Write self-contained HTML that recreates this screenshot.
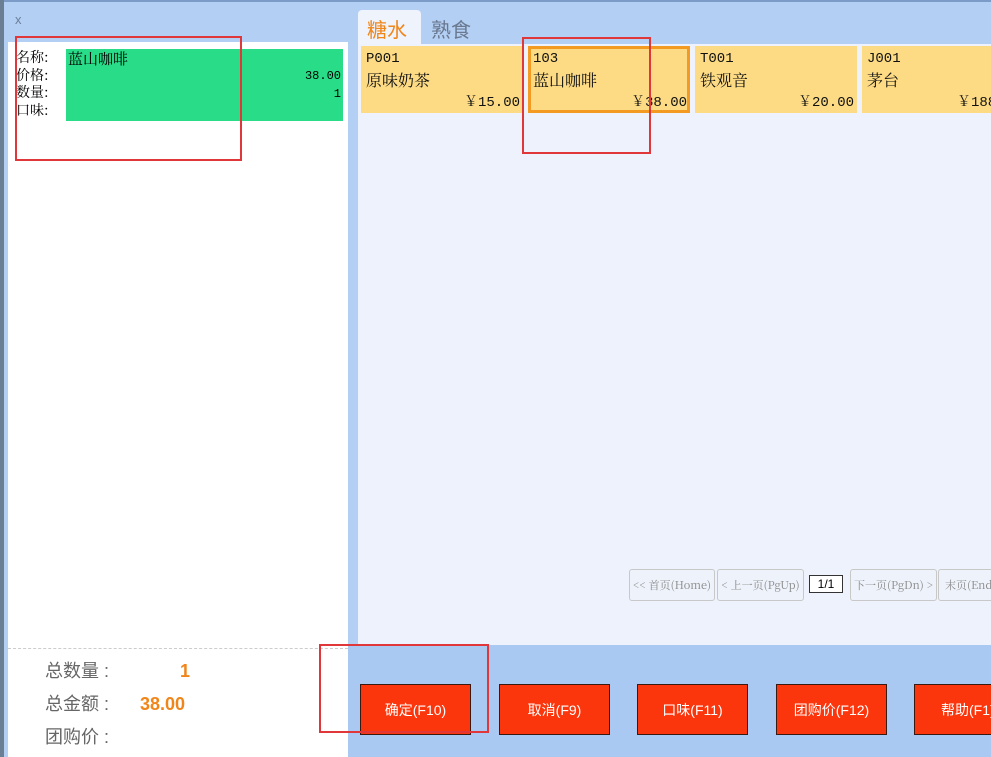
<!DOCTYPE html>
<html><head><meta charset="utf-8"><style>
*{margin:0;padding:0;box-sizing:border-box}
body{width:991px;height:757px;overflow:hidden;background:#b3cff3;position:relative;font-family:"Liberation Sans","Noto Sans CJK SC",sans-serif}
.abs{position:absolute}
.mono{font-family:"Liberation Mono","Noto Sans CJK SC",monospace}
.tile{position:absolute;top:46px;width:162px;height:67px;background:#fddb84;font-size:15px;color:#111}
.tile .c{position:absolute;left:5px;top:5px;font-family:"Liberation Mono","Noto Serif CJK SC",monospace;font-size:14px}
.tile .n{position:absolute;left:5px;top:22px;font-family:"Noto Serif CJK SC",serif;font-size:16px}
.tile .p{position:absolute;right:3px;top:45px;font-family:"Liberation Mono","Noto Serif CJK SC",monospace;font-size:14px}
.btn{position:absolute;top:684px;width:111px;height:51px;background:#fc360c;border:1px solid #3a1a10;color:#fff;font-size:14px;display:flex;align-items:center;justify-content:center}
.pg{position:absolute;top:569px;height:32px;border:1px solid #c8c8c8;border-radius:3px;background:#eef2fa;color:#888;font-size:11px;display:flex;align-items:center;justify-content:center;white-space:nowrap;overflow:hidden;font-family:"Noto Serif CJK SC",serif}
.red{position:absolute;border:2px solid #e0383a}
</style></head><body>
<div class="abs" style="left:0;top:0;width:4px;height:757px;background:#6a7f94"></div>
<div class="abs" style="left:4px;top:0;width:991px;height:2px;background:#7d9bc7"></div>
<div class="abs" style="left:15px;top:12px;font-size:13px;color:#6a7f9a">x</div>
<div class="abs" style="left:8px;top:42px;width:340px;height:715px;background:#fff"></div>
<div class="abs" style="left:66px;top:49px;width:277px;height:72px;background:#28dc88"></div>
<div class="abs" style="left:16px;top:49px;font-size:14px;line-height:17.5px;color:#000;font-family:'Noto Serif CJK SC',serif">名称:<br>价格:<br>数量:<br>口味:</div>
<div class="abs" style="left:68px;top:48px;font-size:15px;font-family:'Noto Serif CJK SC',serif">蓝山咖啡</div>
<div class="abs mono" style="right:650px;top:69px;font-size:12px">38.00</div>
<div class="abs mono" style="right:650px;top:87px;font-size:12px">1</div>
<div class="red" style="left:15px;top:36px;width:227px;height:125px"></div>
<div class="abs" style="left:8px;top:648px;width:340px;border-top:1px dashed #ccc"></div>
<div class="abs" style="left:45px;top:655px;font-size:18px;color:#666;line-height:33px">总数量 :<br>总金额 :<br>团购价 :</div>
<div class="abs" style="left:180px;top:655px;font-size:18px;color:#f0851a;font-weight:bold;line-height:33px">1</div>
<div class="abs" style="left:140px;top:688px;font-size:18px;color:#f0851a;font-weight:bold;line-height:33px">38.00</div>
<div class="abs" style="left:358px;top:10px;width:63px;height:36px;background:#eef3fc;border-radius:4px 4px 0 0"></div>
<div class="abs" style="left:367px;top:14px;font-size:20px;color:#f0851a">糖水</div>
<div class="abs" style="left:431px;top:14px;font-size:20px;color:#6a7890">熟食</div>
<div class="abs" style="left:358px;top:44px;width:633px;height:601px;background:#edf2fc"></div>
<div class="tile" style="left:361px"><div class="c">P001</div><div class="n">原味奶茶</div><div class="p">￥15.00</div></div>
<div class="tile" style="left:528px;border:3px solid #f39a22"><div class="c" style="left:2px;top:2px">103</div><div class="n" style="left:2px;top:19px">蓝山咖啡</div><div class="p" style="right:0;top:42px">￥38.00</div></div>
<div class="tile" style="left:695px"><div class="c">T001</div><div class="n">铁观音</div><div class="p">￥20.00</div></div>
<div class="tile" style="left:862px;width:140px"><div class="c">J001</div><div class="n">茅台</div><div class="p" style="right:auto;left:95px">￥188</div></div>
<div class="red" style="left:522px;top:37px;width:129px;height:117px"></div>
<div class="pg" style="left:629px;width:86px">&lt;&lt; 首页(Home)</div>
<div class="pg" style="left:717px;width:87px">&lt; 上一页(PgUp)</div>
<div class="abs" style="left:809px;top:575px;width:34px;height:18px;border:1px solid #333;background:#fff;font-size:12px;text-align:center;line-height:16px">1/1</div>
<div class="pg" style="left:850px;width:87px">下一页(PgDn) &gt;</div>
<div class="pg" style="left:938px;width:70px;justify-content:flex-start;padding-left:6px">末页(End)</div>
<div class="abs" style="left:348px;top:645px;width:643px;height:112px;background:#a9c8f2"></div>
<div class="btn" style="left:360px">确定(F10)</div>
<div class="btn" style="left:499px">取消(F9)</div>
<div class="btn" style="left:637px">口味(F11)</div>
<div class="btn" style="left:776px">团购价(F12)</div>
<div class="btn" style="left:914px;width:90px;justify-content:flex-start;padding-left:26px">帮助(F1)</div>
<div class="red" style="left:319px;top:644px;width:170px;height:89px"></div>
</body></html>
